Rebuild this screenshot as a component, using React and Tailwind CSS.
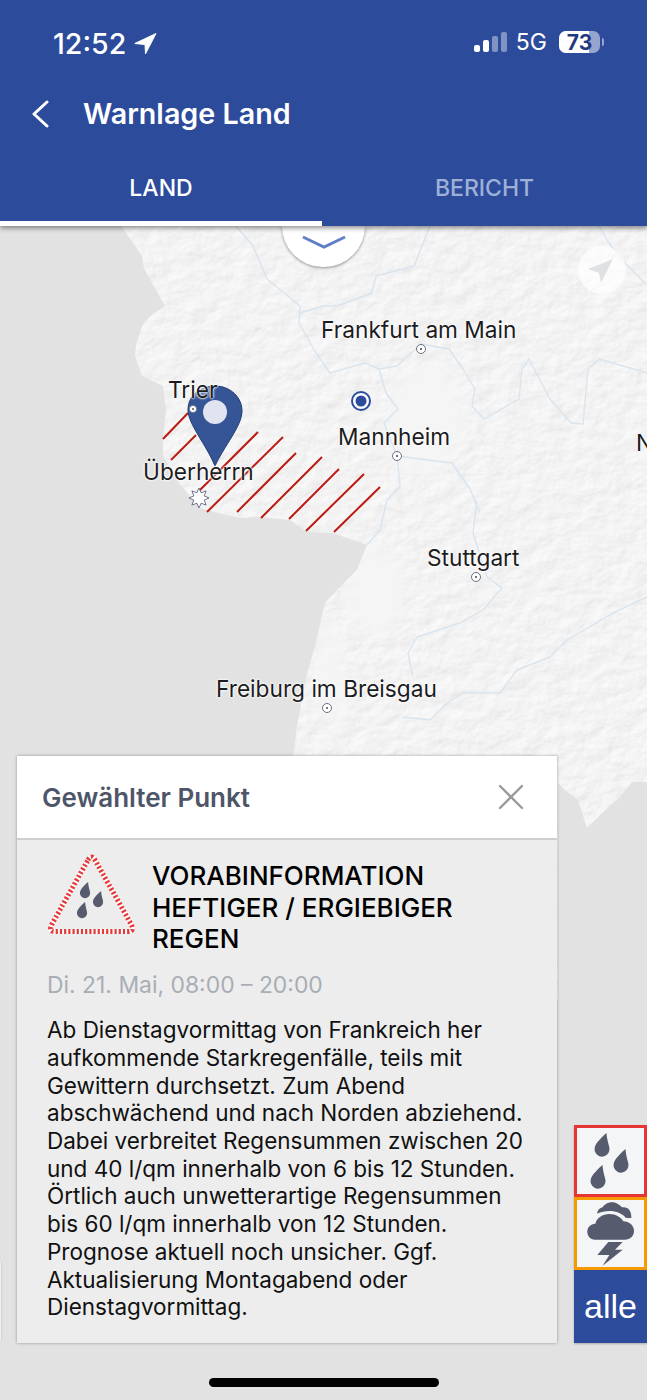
import React from "react";

const LAND =
  "M0 226 L121 226 L131 240 L142 256 L144 268 L156 290 L165 306 L150 316 L142 326 L136 345 L135 356 L142 376 L163 386 L166 410 L163 439 L163 456 L178 482 L200 508 L222 514 L240 518 L260 517 L290 520 L307 532 L333 533 L367 545 L357 570 L340 587 L325 603 L315 647 L307 673 L297 727 L293 757 L293 1000 L558 1000 L558 783 L565 790 L578 800 L587 828 L600 815 L620 797 L632 782 L647 782 L647 226 Z";

const RIVERS = [
  "M236 226 L253 246 L267 279 L288 296 L300 306 L299 323 L316 353 L330 373 L365 363 L379 369 L397 366 L421 344 L449 349 L463 369 L475 389 L472 406 L484 419 L519 399 L522 369 L529 359 L550 399 L571 423 L583 424 L588 369 L599 359 L647 373",
  "M379 369 L386 393 L398 409 L384 423 L397 456 L400 486 L387 500 L380 530 L367 545",
  "M397 456 L452 463 L470 489 L480 513",
  "M300 313 L323 306 L337 306 L372 293 L376 276 L414 266 L430 226",
  "M477 500 L473 533 L487 577 L502 588 L483 610 L460 623 L417 637 L408 653 L413 677",
  "M647 597 L613 613 L567 640 L550 657 L517 670 L500 693 L463 693 L447 703 L430 720 L403 717",
  "M599 226 L609 243 L623 261 L647 285",
];

const HATCH = [
  "M163 439 L188 413",
  "M171 460 L196 435",
  "M198 492 L258 432",
  "M207 512 L283 437",
  "M237 512 L296 453",
  "M261 518 L322 457",
  "M289 519 L339 469",
  "M306 531 L364 474",
  "M334 532 L380 487",
];

const STAR_POINTS = Array.from({ length: 16 }, (_, i) => {
  const r = i % 2 === 0 ? 10 : 5.6;
  const a = (i * Math.PI) / 8 - Math.PI / 2;
  return `${(199 + r * Math.cos(a)).toFixed(1)},${(498 + r * Math.sin(a)).toFixed(1)}`;
}).join(" ");

const CITY_LABELS = "absolute text-[22.7px] leading-7 text-[#1c1c1e] whitespace-nowrap [text-shadow:0_0_2px_#fff,0_0_2px_#fff,0_0_3px_#fff]";

// tear drop, tip up and leaning right
const Drop = ({ x, y, s = 1, fill = "#565b6e" }) => (
  <path
    transform={`translate(${x} ${y}) scale(${s})`}
    fill={fill}
    d="M4.5 -16 C5 -8 7.5 -3 7.5 0 A7.5 7.5 0 1 1 -7.4 -1 C-6.5 -6 0 -12 4.5 -16 Z"
  />
);

const CityDot = ({ x, y }) => (
  <g>
    <circle cx={x} cy={y} r="4.5" fill="#fff" stroke="#6a7080" strokeWidth="1" />
    <circle cx={x} cy={y} r="1" fill="#444" />
  </g>
);

const MapLayer = () => (
  <svg className="absolute inset-0" width="647" height="1174" viewBox="0 226 647 1174">
    <defs>
      <clipPath id="land">
        <path d={LAND} />
      </clipPath>
      <filter id="relief" x="0" y="0" width="100%" height="100%" colorInterpolationFilters="sRGB">
        <feTurbulence type="fractalNoise" baseFrequency="0.05 0.07" numOctaves="4" seed="7" />
        <feDiffuseLighting surfaceScale="1.6" diffuseConstant="1" lightingColor="#fff">
          <feDistantLight azimuth="225" elevation="55" />
        </feDiffuseLighting>
        <feGaussianBlur stdDeviation="0.6" />
        <feComponentTransfer>
          <feFuncR type="linear" slope="0.22" intercept="0.775" />
          <feFuncG type="linear" slope="0.22" intercept="0.775" />
          <feFuncB type="linear" slope="0.22" intercept="0.775" />
        </feComponentTransfer>
      </filter>
      <filter id="soft">
        <feGaussianBlur stdDeviation="10" />
      </filter>
    </defs>
    <rect x="0" y="226" width="647" height="1174" fill="#e2e2e2" />
    <g clipPath="url(#land)">
      <rect x="0" y="226" width="647" height="800" fill="#f4f4f4" filter="url(#relief)" />
      {/* flat valleys have almost no relief */}
      <ellipse cx="425" cy="420" rx="38" ry="55" fill="#f5f5f5" filter="url(#soft)" />
      <ellipse cx="375" cy="590" rx="28" ry="45" fill="#f5f5f5" filter="url(#soft)" />
      <ellipse cx="330" cy="670" rx="14" ry="55" fill="#f5f5f5" filter="url(#soft)" />
    </g>
    {RIVERS.map((d, i) => (
      <path key={i} d={d} fill="none" stroke="#d9e4ee" strokeWidth="1.4" strokeLinejoin="round" />
    ))}
    {HATCH.map((d, i) => (
      <path key={i} d={d} fill="none" stroke="#bb1b10" strokeWidth="2" />
    ))}
    <CityDot x={421} y={349} />
    <CityDot x={397} y={456} />
    <CityDot x={476} y={577} />
    <CityDot x={327} y={708} />
    <circle cx="361" cy="401" r="9" fill="#fff" stroke="#2c4b9b" strokeWidth="2" />
    <circle cx="361" cy="401" r="5.5" fill="#2c4b9b" />
    {/* pin */}
    <path
      d="M215 466 C206 444 188 424 188 410 C188 395 201 386 215 386 C230 386 242 397 242 411 C242 426 224 446 215 466 Z"
      fill="#365596"
      stroke="#1e3a70"
      strokeWidth="1"
    />
    <circle cx="215" cy="412" r="12" fill="#dfe4f0" />
    <circle cx="193" cy="409" r="3.6" fill="#fff" stroke="#6a7080" strokeWidth="0.8" />
    <circle cx="193" cy="409" r="0.9" fill="#444" />
    <polygon points={STAR_POINTS} fill="#fff" stroke="#5e6680" strokeWidth="0.9" />
  </svg>
);

const StatusBar = () => (
  <div className="flex h-[86px] items-start justify-between pl-[53px] pr-[43px] pt-[27px]">
    <div className="flex items-center gap-2 pt-px">
      <span className="text-[28.5px] leading-8 font-medium text-white">12:52</span>
      <svg width="23" height="22" viewBox="0 0 23 22">
        <path d="M22 0.5 L0.8 10.5 L11 11.5 L11.5 20.8 Z" fill="#fff" stroke="#fff" strokeLinejoin="round" />
      </svg>
    </div>
    <div className="flex items-center pt-[3px]">
      <div className="flex h-5 items-end gap-[3px]">
        <div className="h-[7px] w-[6px] rounded-[2px] bg-white" />
        <div className="h-3 w-[6px] rounded-[2px] bg-white" />
        <div className="h-4 w-[6px] rounded-[2px] bg-white/40" />
        <div className="h-5 w-[6px] rounded-[2px] bg-white/40" />
      </div>
      <span className="ml-[9px] text-[23px] leading-6 text-white">5G</span>
      <div className="relative ml-3 flex h-[22px] w-[41px] items-center justify-center overflow-hidden rounded-[7px] bg-white/50">
        <div className="absolute inset-y-0 left-0 w-[30px] bg-white" />
        <span className="relative text-[21px] leading-none font-bold text-[#1f3a80]">73</span>
      </div>
      <div className="ml-[2px] h-2 w-[2px] rounded-r-full bg-white/50" />
    </div>
  </div>
);

const Header = () => (
  <div className="relative z-10 h-[226px] shrink-0 bg-[#2c4b9b] shadow-[0_2px_5px_rgba(0,0,0,0.45)]">
    <StatusBar />
    <div className="flex h-14 items-center pl-[31px]">
      <svg width="19" height="28" viewBox="0 0 19 28" fill="none">
        <path d="M16 2 L3 14 L16 26" stroke="#fff" strokeWidth="3" strokeLinecap="round" strokeLinejoin="round" />
      </svg>
      <h1 className="ml-[33px] text-[28.7px] font-semibold text-white">Warnlage Land</h1>
    </div>
    <div className="flex h-[84px]">
      <div className="flex w-[322px] flex-col border-b-[5px] border-white pt-[14px]">
        <div className="flex flex-1 items-center justify-center text-[23px] font-medium text-white">LAND</div>
      </div>
      <div className="flex flex-1 flex-col pb-[5px] pt-[14px]">
        <div className="flex flex-1 items-center justify-center text-[23px] font-medium text-[#9fb0d6]">BERICHT</div>
      </div>
    </div>
  </div>
);

const FilterButtons = () => (
  <div className="absolute bottom-[57px] right-0 flex w-[73px] flex-col shadow-[0_1px_2px_rgba(0,0,0,0.25)]">
    <div className="h-[72px] border-[3px] border-[#e53535] bg-[#f4f5f7]">
      <svg width="67" height="66" viewBox="0 0 67 66">
        <Drop x={25} y={21} />
        <Drop x={44} y={37} />
        <Drop x={21} y={53} />
      </svg>
    </div>
    <div className="h-[73px] border-[3px] border-[#f59a00] bg-[#f4f5f7]">
      <svg width="67" height="67" viewBox="111 271 201 201">
        <path
          d="M172 312 C172 300 180 295 188 293 C195 280 215 272 232 282 C240 286 243 290 246 293 C262 290 275 300 274 325 L258 325 C248 312 228 304 208 304 C195 304 182 307 172 312 Z"
          fill="#565b6e"
        />
        <path
          d="M165 390 C150 390 142 378 142 366 C142 352 152 343 166 342 C170 325 188 313 208 313 C228 313 243 323 250 335 C268 335 282 348 282 364 C282 380 270 390 255 390 Z"
          fill="#565b6e"
        />
        <path d="M205 397 L248 397 L225 420 L248 420 L188 468 L208 436 L172 436 Z" fill="#565b6e" />
      </svg>
    </div>
    <div className="flex h-[73px] items-center justify-center bg-[#2c4b9b] font-['Liberation_Sans',sans-serif] text-[34px] text-white">
      alle
    </div>
  </div>
);

const WarningIcon = () => (
  <svg className="shrink-0" width="90" height="84" viewBox="2 0 90 84" fill="none">
    <path d="M43 9 Q46.5 3 50 9 L86 73 Q90 80.5 83 80.5 L10 80.5 Q3 80.5 7 73 Z" stroke="#fff" strokeWidth="5" />
    <path
      d="M43 9 Q46.5 3 50 9 L86 73 Q90 80.5 83 80.5 L10 80.5 Q3 80.5 7 73 Z"
      stroke="#e53a3a"
      strokeWidth="5"
      strokeDasharray="2.2 2"
    />
    <Drop x={40} y={42} s={0.68} />
    <Drop x={53} y={51} s={0.68} />
    <Drop x={37} y={62} s={0.68} />
  </svg>
);

const InfoPanel = () => (
  <div className="absolute bottom-[57px] left-[17px] w-[540px] bg-[#ededed] shadow-[0_0_3px_rgba(0,0,0,0.35)]">
    <div className="flex h-[84px] items-center justify-between border-b-2 border-[#cfcfcf] bg-white pl-[25px] pr-[32px]">
      <h2 className="text-[26px] font-semibold text-[#4e5568]">Gewählter Punkt</h2>
      <svg width="28" height="28" viewBox="0 0 28 28" fill="none">
        <path d="M3 3 L25 25 M25 3 L3 25" stroke="#9a9a9a" strokeWidth="2.4" strokeLinecap="round" />
      </svg>
    </div>
    <div className="pb-[22px] pl-[30px] pr-[27px] pt-[11px]">
      <div className="flex items-start">
        <WarningIcon />
        <h3 className="ml-[15px] mt-[9px] text-[26px] leading-[31.5px] font-medium text-black">
          VORABINFORMATION
          <br />
          HEFTIGER / ERGIEBIGER
          <br />
          REGEN
        </h3>
      </div>
      <p className="mt-[16.5px] text-[22.9px] leading-7 text-[#a9adb5]">Di. 21. Mai, 08:00 – 20:00</p>
      <p className="mt-[17px] text-[22.5px] leading-[27.7px] text-[#111]">
        Ab Dienstagvormittag von Frankreich her aufkommende Starkregenfälle, teils mit Gewittern durchsetzt. Zum Abend
        abschwächend und nach Norden abziehend. Dabei verbreitet Regensummen zwischen 20 und 40 l/qm innerhalb von 6 bis
        12 Stunden. Örtlich auch unwetterartige Regensummen bis 60 l/qm innerhalb von 12 Stunden. Prognose aktuell noch
        unsicher. Ggf. Aktualisierung Montagabend oder Dienstagvormittag.
      </p>
    </div>
  </div>
);

export default function App() {
  return (
    <div className="relative flex h-[1400px] w-[647px] flex-col overflow-hidden bg-[#e2e2e2] font-['Inter',sans-serif]">
      <Header />
      <div className="relative flex-1">
        <MapLayer />

        <span className={`${CITY_LABELS} left-[321px] top-[90px]`}>Frankfurt am Main</span>
        <span className={`${CITY_LABELS} left-[338px] top-[197px]`}>Mannheim</span>
        <span className={`${CITY_LABELS} left-[636px] top-[203px]`}>N</span>
        <span className={`${CITY_LABELS} left-[168px] top-[150px]`}>Trier</span>
        <span className={`${CITY_LABELS} left-[143px] top-[232px]`}>Überherrn</span>
        <span className={`${CITY_LABELS} left-[427px] top-[318px]`}>Stuttgart</span>
        <span className={`${CITY_LABELS} left-[216px] top-[449px]`}>Freiburg im Breisgau</span>

        {/* pull-down handle */}
        <div className="absolute left-[282px] top-0 flex h-[41px] w-[83px] justify-center rounded-b-full bg-white pt-[9px] shadow-[0_1px_3px_rgba(0,0,0,0.4)]">
          <svg width="46" height="14" viewBox="0 0 46 14" fill="none">
            <path d="M2 2 L23 12 L44 2" stroke="#5f7fc6" strokeWidth="3" />
          </svg>
        </div>

        {/* locate button */}
        <div className="absolute left-[578px] top-[20px] flex h-12 w-12 items-center justify-center rounded-full bg-white/70">
          <svg width="28" height="28" viewBox="0 0 28 28">
            <path d="M25 3 L0 13 L11 17 L13 27 Z" fill="#dfe1e4" />
          </svg>
        </div>

        <div className="absolute bottom-[60px] left-0 h-[78px] w-px bg-[#f0f0f0] shadow-[0_0_2px_rgba(0,0,0,0.3)]" />

        <InfoPanel />
        <FilterButtons />

        <div className="absolute bottom-[13px] left-[209px] h-[9px] w-[230px] rounded-full bg-black" />
      </div>
    </div>
  );
}
